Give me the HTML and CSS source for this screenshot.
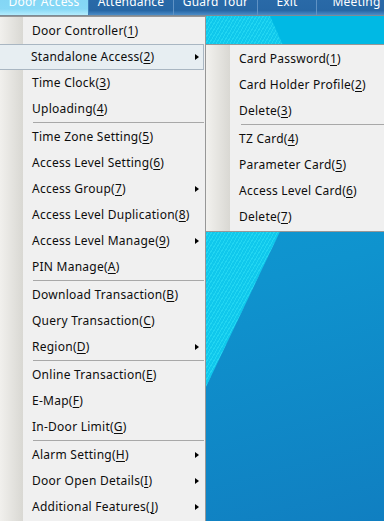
FILE: index.html
```html
<!DOCTYPE html>
<html lang="en">
<head>
  <meta charset="UTF-8" />
  <title>Door Access</title>
  <link rel="stylesheet" href="styles.css">
</head>
<body>
  <div class="tabbar">
    <div class="tab active w1">Door Access</div>
    <div class="tab w2">Attendance</div>
    <div class="tab w3">Guard Tour</div>
    <div class="tab w4">Exit</div>
    <div class="tab w5">Meeting</div>
  </div>

  <div class="desk">
    <!-- main drop down -->
    <ul class="menu main-menu">
      <li>Door Controller(<u>1</u>)</li>
      <li class="sub hover">Standalone Access(<u>2</u>)</li>
      <li>Time Clock(<u>3</u>)</li>
      <li>Uploading(<u>4</u>)</li>
      <li class="sep"></li>
      <li>Time Zone Setting(<u>5</u>)</li>
      <li>Access Level Setting(<u>6</u>)</li>
      <li class="sub">Access Group(<u>7</u>)</li>
      <li>Access Level Duplication(<u>8</u>)</li>
      <li class="sub">Access Level Manage(<u>9</u>)</li>
      <li>PIN Manage(<u>A</u>)</li>
      <li class="sep"></li>
      <li>Download Transaction(<u>B</u>)</li>
      <li>Query Transaction(<u>C</u>)</li>
      <li class="sub">Region(<u>D</u>)</li>
      <li class="sep"></li>
      <li>Online Transaction(<u>E</u>)</li>
      <li>E-Map(<u>F</u>)</li>
      <li>In-Door Limit(<u>G</u>)</li>
      <li class="sep"></li>
      <li class="sub">Alarm Setting(<u>H</u>)</li>
      <li class="sub">Door Open Details(<u>I</u>)</li>
      <li class="sub">Additional Features(<u>J</u>)</li>
    </ul>

    <!-- Standalone Access sub menu -->
    <ul class="menu sub-menu">
      <li>Card Password(<u>1</u>)</li>
      <li>Card Holder Profile(<u>2</u>)</li>
      <li>Delete(<u>3</u>)</li>
      <li class="sep"></li>
      <li>TZ Card(<u>4</u>)</li>
      <li>Parameter Card(<u>5</u>)</li>
      <li>Access Level Card(<u>6</u>)</li>
      <li>Delete(<u>7</u>)</li>
    </ul>
  </div>
</body>
</html>
```

FILE: styles.css
```css
body {
  margin: 0;
  overflow: hidden;
  font-family: "Noto Sans", "Open Sans", sans-serif;
  font-size: 12px;
  background: #0f8fcb;
}
.tabbar {
  display: flex;
  align-items: flex-end;
  height: 15px;
  overflow: hidden;
  border-bottom: 1px solid #7e8b96;
}
.tab {
  flex-shrink: 0;
  height: 30px;
  padding-top: 5px;
  box-sizing: border-box;
  line-height: 24px;
  text-align: center;
  color: #fff;
  letter-spacing: 0.2px;
  background: linear-gradient(#2c6dab, #2767a5 85%, #4b8cc7);
  border-right: 1px solid #5f92c4;
}
.tab.active {
  background: linear-gradient(#7fd3f3, #86d8f6 80%, #b3ecfd);
  border-right-color: #3f7fb8;
}
.w1 { width: 89px; }
.w2 { width: 85px; }
.w3 { width: 84px; }
.w4 { width: 59px; }
.w5 { width: 80px; }

.desk {
  position: relative;
  height: 505px;
  background:
    linear-gradient(#00b9e4, #00b9e4) top left / 100% 60px no-repeat,
    linear-gradient(165deg, #0ea3da 0%, #0f93ce 55%, #107fc1 100%);
}
.desk::before,
.desk::after {
  content: "";
  position: absolute;
  left: 205px;
  background: repeating-linear-gradient(120deg, #10c8ec 0 2px, #22d6f2 2px 3px);
}
.desk::before {
  top: 0;
  width: 80px;
  height: 34px;
  clip-path: polygon(0 0, 65px 0, 80px 34px, 0 34px);
}
.desk::after {
  top: 205px;
  width: 80px;
  height: 168px;
  clip-path: polygon(0 0, 80px 0, 0 168px);
}

.menu {
  position: absolute;
  margin: 0;
  padding: 1px;
  list-style: none;
  border: 1px solid #979797;
  color: #0d0d0d;
  letter-spacing: 0.25px;
  background: linear-gradient(to right, #f2f1ee, #d9d8d3 24px, #f0f0f0 24px);
  z-index: 2;
}
.main-menu {
  top: 0;
  left: -2px;
  width: 204px;
}
.sub-menu {
  top: 28px;
  left: 205px;
  width: 200px;
}
.menu li {
  position: relative;
  height: 26px;
  line-height: 26px;
  padding-left: 32px;
  white-space: nowrap;
}
.menu li.sep {
  height: 1px;
  margin-left: 33px;
  padding: 0;
  border-top: 1px solid #a8a8a8;
}
.sub-menu li.sep { margin-left: 34px; }
.menu li.hover {
  box-sizing: border-box;
  width: 204px;
  line-height: 24px;
  padding-left: 31px;
  border: 1px solid #a9b6c2;
  border-left: 0;
  background: #e7eef2;
}
.menu li.sub::after {
  content: "";
  position: absolute;
  right: 5px;
  top: 10px;
  border-left: 4px solid #000;
  border-top: 3.5px solid transparent;
  border-bottom: 3.5px solid transparent;
}
.menu li.hover::after { right: 4px; top: 9px; }
u { text-underline-offset: 2px; }
```
